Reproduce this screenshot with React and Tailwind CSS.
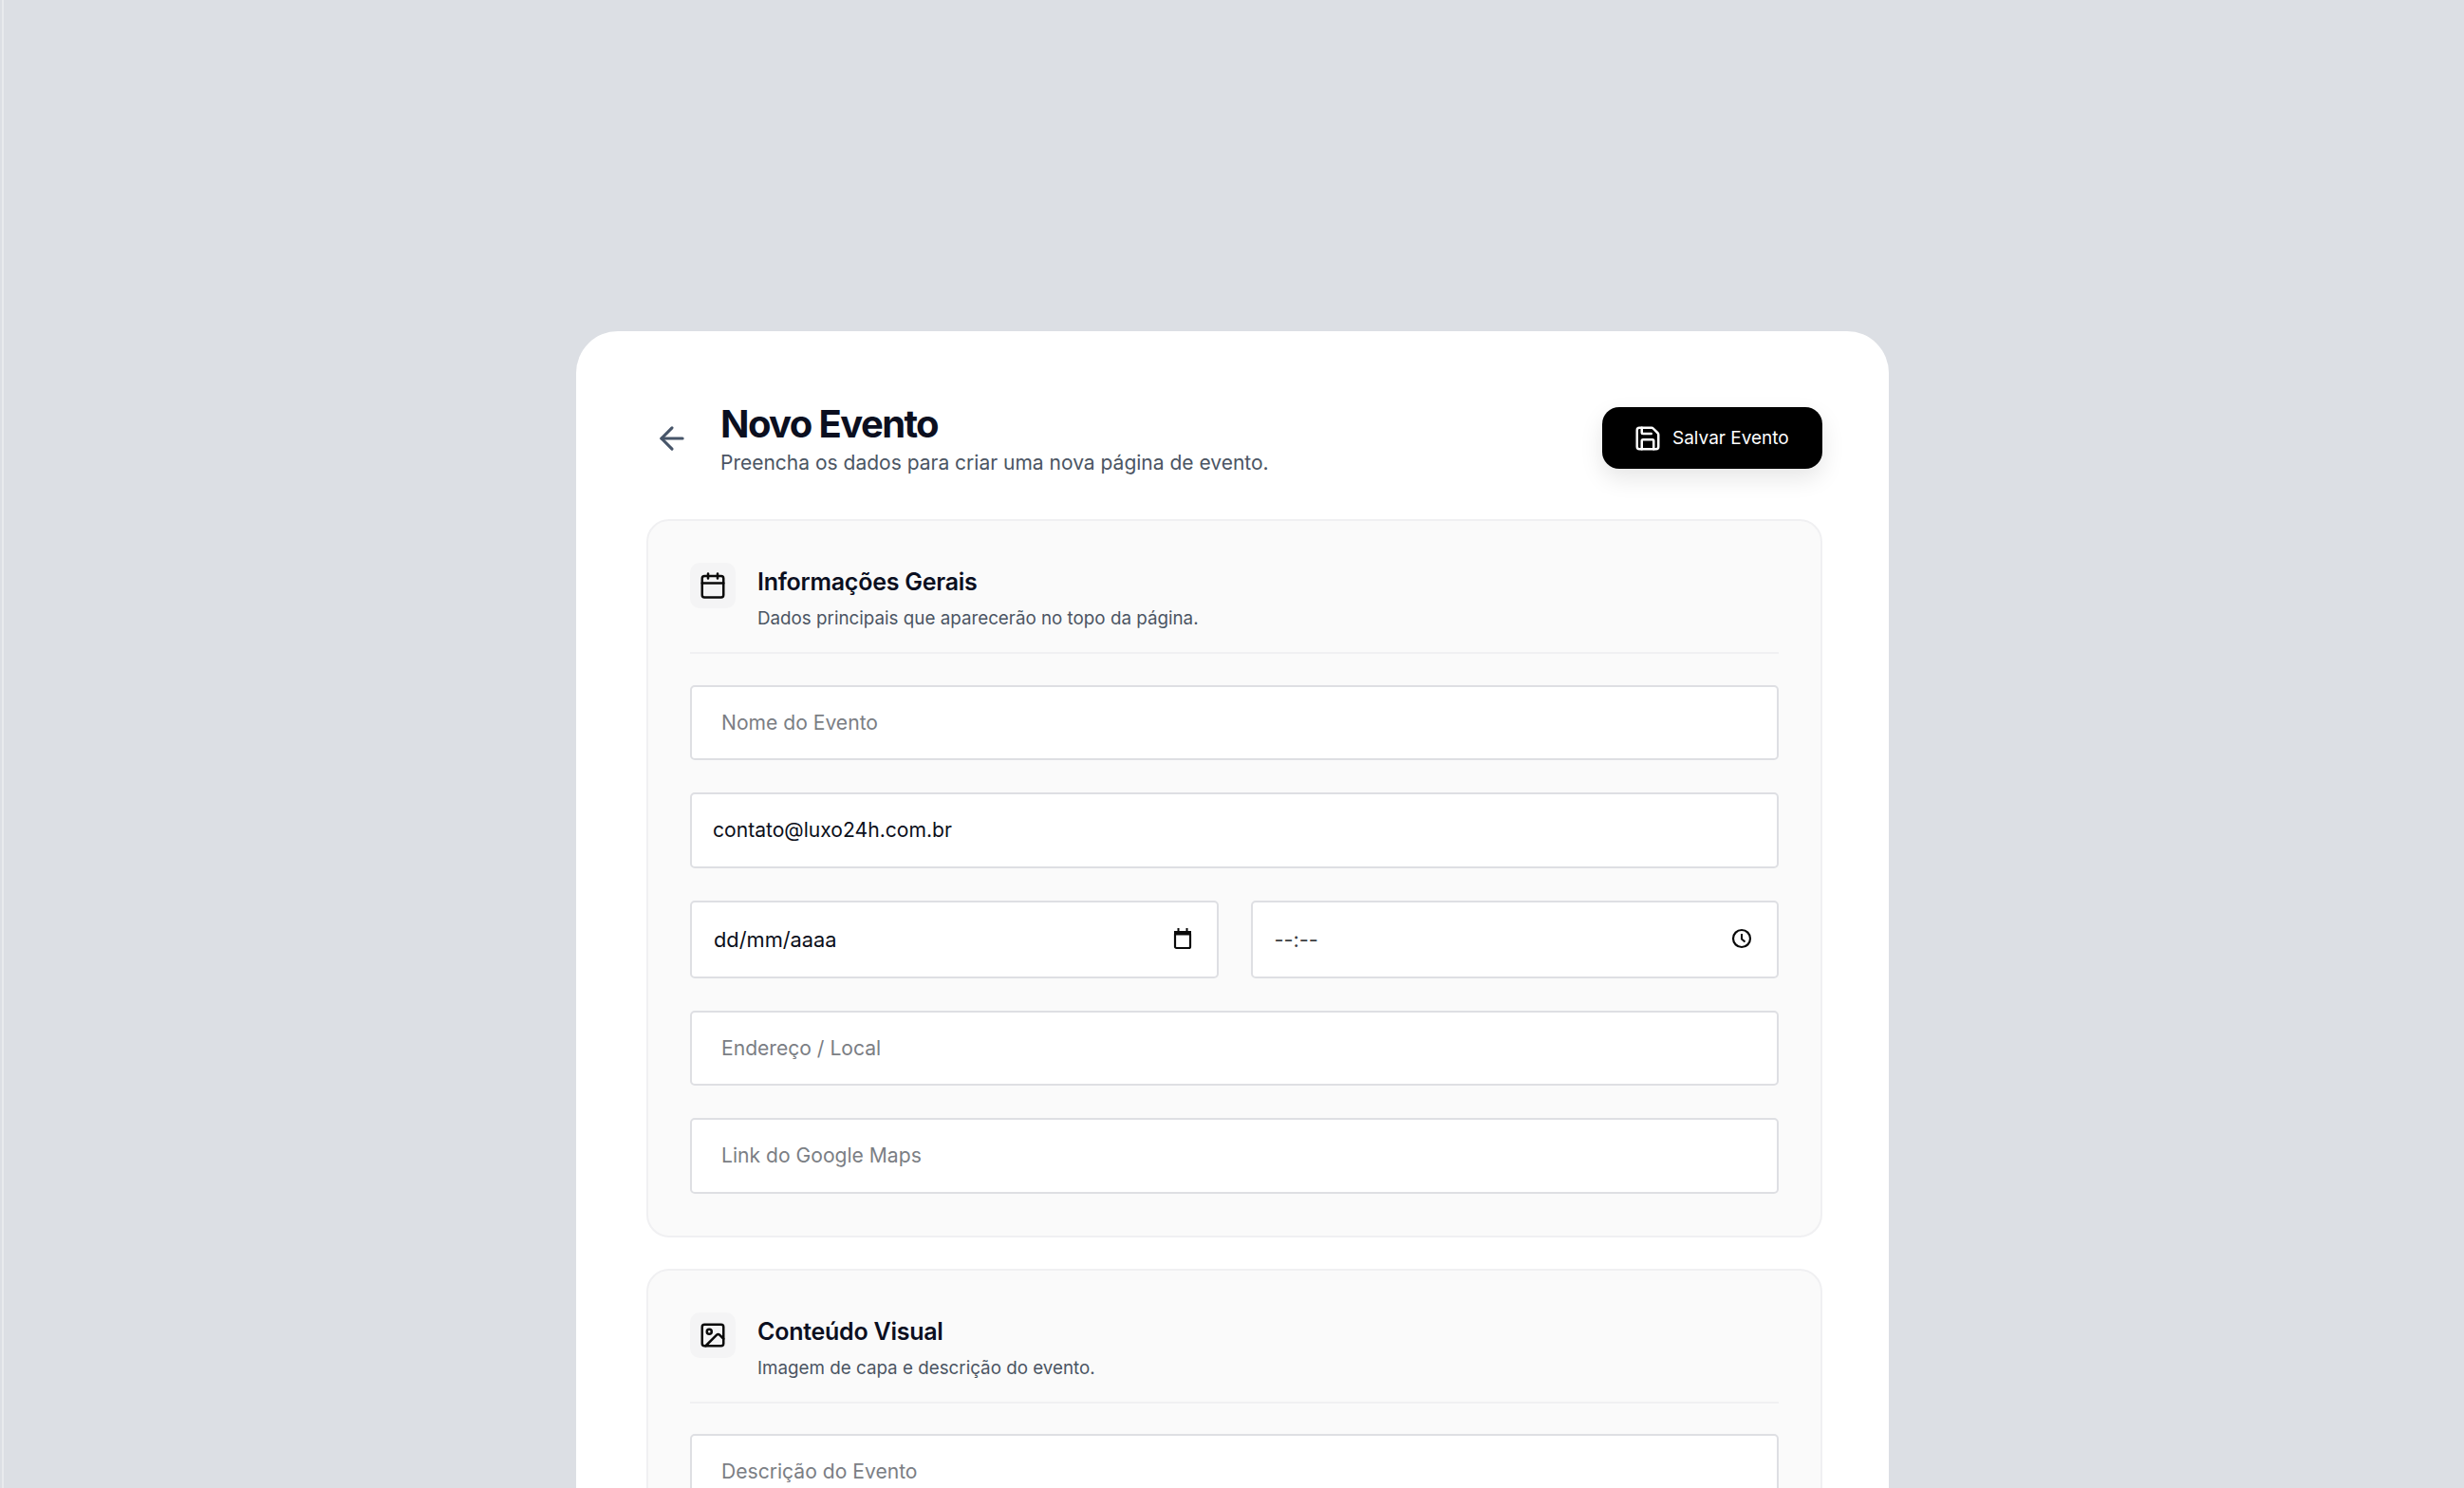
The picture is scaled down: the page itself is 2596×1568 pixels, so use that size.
import { ArrowLeft, Calendar, Image, Save } from 'lucide-react';

const inputClass =
    "w-full bg-white border-2 border-[#dedfe3] rounded-[5px] text-[#0b0f1a] outline-none placeholder:text-[#7b7e84] font-[Inter,sans-serif]";

const TextField = ({ placeholder, value }) => (
    <input
        className={`${inputClass} h-[79.5px] text-[21.1px] ${value ? "pl-[22px]" : "pl-[31px]"}`}
        placeholder={placeholder}
        defaultValue={value}
        readOnly
    />
);

const PickerField = ({ value, muted, children }) => (
    <div className="relative flex-1">
        <input
            className={`${inputClass} h-[82px] pl-[23px] pt-[1px] text-[21.8px] ${muted ? "text-[#3a3d42]" : ""}`}
            defaultValue={value}
            readOnly
        />
        <div className="absolute right-[28px] top-[29px] text-[#0a0a0a]">{children}</div>
    </div>
);

const SectionHeader = ({ icon: Icon, title, subtitle }) => (
    <div className="flex items-start gap-[23px] border-b-2 border-[#f0f0f2] h-[96px]">
        <div className="w-[48px] h-[48px] rounded-[10px] bg-[#f4f4f5] flex items-center justify-center">
            <Icon className="w-[30px] h-[30px] text-[#0a0a0a]" strokeWidth={2} />
        </div>
        <div className="flex flex-col">
            <h2 className="text-[25px] leading-[40px] font-semibold text-[#0b0f1f] tracking-[-0.01em]">{title}</h2>
            <p className="text-[18.8px] leading-[38px] text-[#4b5563]">{subtitle}</p>
        </div>
    </div>
);

export default function App() {
    return (
        <div className="relative h-[1568px] overflow-hidden bg-[#dcdfe4] pt-[349px] font-[Inter,sans-serif] antialiased">
            {/* Thin light line on the left edge of the page */}
            <div className="absolute left-[2px] top-0 bottom-0 w-[2px] bg-[#e8eaed]" />

            <div className="w-[1383px] ml-[607px] bg-white rounded-t-[44px] pt-[80px] pl-[74px] pr-[70px] pb-[60px]">
                {/* Header */}
                <header className="flex items-center justify-between h-[65px] mb-[53px]">
                    <div className="flex items-center gap-[32px] ml-[8px]">
                        <ArrowLeft className="w-[38px] h-[38px] text-[#475569]" strokeWidth={2} />
                        <div className="flex flex-col pt-[6px]">
                            <h1 className="text-[40px] leading-[46px] font-bold text-[#0b0f1f] tracking-[-0.04em]">Novo Evento</h1>
                            <p className="text-[21px] leading-[36px] text-[#4b5563]">Preencha os dados para criar uma nova página de evento.</p>
                        </div>
                    </div>
                    <button className="w-[232px] h-[65px] bg-black text-white rounded-[18px] flex items-center pl-[33px] gap-[11px] text-[19px] font-normal shadow-[0_10px_24px_rgba(0,0,0,0.10)]">
                        <Save className="w-[30px] h-[30px]" strokeWidth={2} />
                        <span className="pt-[2px]">Salvar Evento</span>
                    </button>
                </header>

                <div className="flex flex-col gap-[33px]">
                    {/* Informações Gerais */}
                    <section className="bg-[#fafafa] border-2 border-[#f0f0f2] rounded-[24px] p-[44px]">
                        <SectionHeader
                            icon={Calendar}
                            title="Informações Gerais"
                            subtitle="Dados principais que aparecerão no topo da página."
                        />
                        <div className="flex flex-col gap-[34px] mt-[32.5px]">
                            <TextField placeholder="Nome do Evento" />
                            <TextField value="contato@luxo24h.com.br" />
                            <div className="flex gap-[34px]">
                                <PickerField value="dd/mm/aaaa">
                                    <svg width="20" height="23" viewBox="0 0 20 23" fill="none" className="block">
                                        <rect x="2" y="5" width="16" height="16" rx="1.5" stroke="currentColor" strokeWidth="2.2" />
                                        <path d="M1 3h18v4.5H1z" fill="currentColor" />
                                        <path d="M5.5 0v4M14.5 0v4" stroke="currentColor" strokeWidth="2" />
                                    </svg>
                                </PickerField>
                                <PickerField value="--:--" muted>
                                    <svg width="22" height="22" viewBox="0 0 22 22" fill="none" className="block">
                                        <circle cx="11" cy="11" r="9" stroke="currentColor" strokeWidth="2.2" />
                                        <path d="M11 6v5.5l3.5 3" stroke="currentColor" strokeWidth="2" />
                                    </svg>
                                </PickerField>
                            </div>
                            <TextField placeholder="Endereço / Local" />
                            <TextField placeholder="Link do Google Maps" />
                        </div>
                    </section>

                    {/* Conteúdo Visual */}
                    <section className="bg-[#fafafa] border-2 border-[#f0f0f2] rounded-[24px] p-[44px]">
                        <SectionHeader
                            icon={Image}
                            title="Conteúdo Visual"
                            subtitle="Imagem de capa e descrição do evento."
                        />
                        <div className="mt-[32.5px]">
                            <textarea
                                className="w-full h-[200px] bg-white border-2 border-[#dedfe3] rounded-[5px] pl-[31px] pt-[23px] text-[21.1px] leading-[30px] outline-none resize-none placeholder:text-[#7b7e84]"
                                placeholder="Descrição do Evento"
                                readOnly
                            />
                        </div>
                    </section>
                </div>
            </div>
        </div>
    );
}
